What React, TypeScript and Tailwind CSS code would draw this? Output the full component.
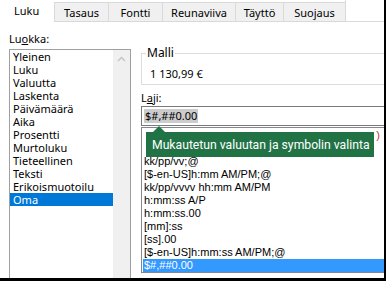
import React from "react";

const tabs = [
  { label: "Tasaus", w: "w-[54px]" },
  { label: "Fontti", w: "w-[54px]" },
  { label: "Reunaviiva", w: "w-[73px]" },
  { label: "Täyttö", w: "w-[48px]" },
  { label: "Suojaus", w: "w-[62px]" },
];

const categories = [
  "Yleinen",
  "Luku",
  "Valuutta",
  "Laskenta",
  "Päivämäärä",
  "Aika",
  "Prosentti",
  "Murtoluku",
  "Tieteellinen",
  "Teksti",
  "Erikoismuotoilu",
  "Oma",
];

// first two rows sit under the tooltip
const formats = [
  "",
  "",
  "kk/pp/vv;@",
  "[$-en-US]h:mm AM/PM;@",
  "kk/pp/vvvv hh:mm AM/PM",
  "h:mm:ss A/P",
  "h:mm:ss.00",
  "[mm]:ss",
  "[ss].00",
  "[$-en-US]h:mm:ss AM/PM;@",
  "$#,##0.00",
];

const ui = { fontFamily: '"Noto Sans", "Open Sans", sans-serif' };
const list = { fontFamily: '"Liberation Sans", Arial, sans-serif' };

export default function App() {
  return (
    <div
      className="relative w-[386px] h-[281px] overflow-hidden bg-white border-r-2 border-b-[3px] border-black text-[11px] text-black"
      style={ui}
    >
      {/* tab strip */}
      <div className="flex h-[22px]">
        <div className="w-[54px] h-[22px] pl-[14px] pt-[3px] leading-[15px] bg-white">Luku</div>
        {tabs.map((t) => (
          <div
            key={t.label}
            className={`${t.w} mt-[2px] h-[20px] flex items-center justify-center bg-[#f0f0f0] border-l border-t border-b border-[#d9d9d9] leading-[15px]`}
          >
            {t.label}
          </div>
        ))}
        <div className="flex-1 border-l border-b border-[#d9d9d9]" />
      </div>

      <div className="flex">
        {/* left: category list */}
        <div className="w-[131px] pl-[9px] shrink-0">
          <div className="mt-[9px] leading-[15px]">
            Lu<span className="underline">o</span>kka:
          </div>
          <div className="mt-[3px] h-[260px] border border-[#a0a0a0] flex">
            <div className="flex-1 flex flex-col">
              {categories.map((c) => (
                <div
                  key={c}
                  className={`h-[13px] leading-[13px] pl-[3px] ${
                    c === "Oma" ? "bg-[#0078d7] text-white" : ""
                  }`}
                >
                  {c}
                </div>
              ))}
            </div>
            <div className="w-[17px] bg-[#f0f0f0] flex justify-center pt-[6px]">
              <svg width="9" height="6" viewBox="0 0 9 6" fill="none">
                <path d="M1 5 L4.5 1.5 L8 5" stroke="#c2c2c2" strokeWidth="1.3" />
              </svg>
            </div>
          </div>
        </div>

        {/* right: sample + type */}
        <div className="flex-1 pl-[10px]">
          <div className="relative mt-[31px] h-[32px] border-l border-t border-b border-[#dcdcdc]">
            <span className="absolute -top-[9px] left-[4px] px-[1px] bg-white leading-[15px] text-[12px]">
              Malli
            </span>
            <div className="pl-[8px] pt-[12px] leading-[15px]">1 130,99 €</div>
          </div>
          <div className="mt-[5px] leading-[15px]">
            L<span className="underline">a</span>ji:
          </div>
          <div className="mt-[1px] h-[20px] border-l border-t border-b border-[#7a7a7a] flex items-center pl-[2px]">
            <span className="bg-[#cccccc] px-[1px] leading-[14px]">$#,##0.00</span>
          </div>
          <div
            className="mt-[1px] h-[146px] border border-r-0 border-[#828790] pl-[1px] pt-[1px] text-[11px] overflow-hidden"
            style={list}
          >
            {formats.map((f, i) => (
              <div
                key={i}
                className={`h-[13px] leading-[13px] pl-[1px] whitespace-nowrap flex ${
                  i === formats.length - 1 ? "bg-[#3399ff] text-white" : ""
                }`}
              >
                {f}
                {i === 0 && <span className="ml-auto mr-[4px] text-[#c0392b]">)</span>}
              </div>
            ))}
          </div>
        </div>
      </div>

      {/* tooltip */}
      <div className="absolute left-[146px] top-[132px] w-[228px] h-[25px] bg-[#217346] text-white flex items-center pl-[6px]">
        <svg className="absolute -top-[6px] left-[7px]" width="12" height="6" viewBox="0 0 12 6">
          <path d="M0 6 L6 0 L12 6 Z" fill="#217346" />
        </svg>
        <span
          className="text-[12.2px] leading-[16px] whitespace-nowrap"
          style={{ fontFamily: "Roboto, sans-serif" }}
        >
          Mukautetun valuutan ja symbolin valinta
        </span>
      </div>
    </div>
  );
}
